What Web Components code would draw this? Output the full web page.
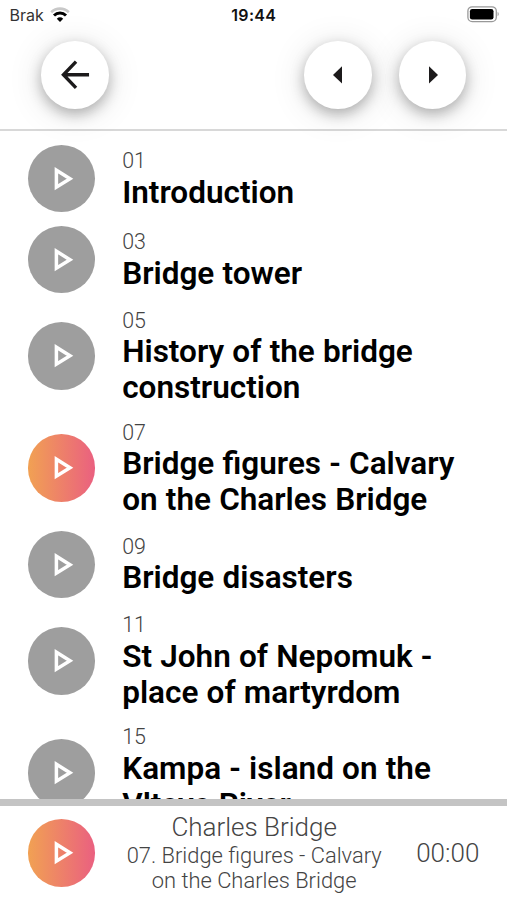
<!DOCTYPE html>
<html lang="en">
<head>
<meta charset="utf-8">
<meta name="viewport" content="width=device-width, initial-scale=1">
<title>Charles Bridge</title>
<style>
  html, body {
    height: 100%;
    margin: 0;
  }

  body {
    background: #fff;
    font-family: Roboto, "Liberation Sans", sans-serif;
  }
</style>
</head>
<body>
<audio-guide>
  <status-bar slot="header" carrier="Brak" time="19:44"></status-bar>
  <guide-toolbar slot="header">
    <round-button icon="back" label="Back"></round-button>
    <round-button icon="previous" label="Previous"></round-button>
    <round-button icon="next" label="Next"></round-button>
  </guide-toolbar>

  <track-row number="01">Introduction</track-row>
  <track-row number="03">Bridge tower</track-row>
  <track-row number="05">History of the bridge<br>construction</track-row>
  <track-row number="07" active>Bridge figures - Calvary<br>on the Charles Bridge</track-row>
  <track-row number="09">Bridge disasters</track-row>
  <track-row number="11">St John of Nepomuk -<br>place of martyrdom</track-row>
  <track-row number="15">Kampa - island on the<br>Vltava River</track-row>

  <mini-player slot="player" time="00:00">
    <span slot="title">Charles Bridge</span>
    07. Bridge figures - Calvary<br>on the Charles Bridge
  </mini-player>
</audio-guide>

<script>
class AudioGuide extends HTMLElement {
  connectedCallback() {
    if (this.shadowRoot) {
      return;
    }

    this.attachShadow({ mode: "open" }).innerHTML = `
      <style>
        :host {
          display: flex;
          flex-direction: column;
          height: 900px;
          overflow: hidden;
          background: #fff;
        }

        header {
          flex: none;
          box-sizing: border-box;
          height: 131px;
          border-bottom: 2px solid #d8d8d8;
        }

        main {
          flex: 1;
          min-height: 0;
          padding-top: 7.2px;
          overflow: hidden;
        }
      </style>
      <header><slot name="header"></slot></header>
      <main><slot></slot></main>
      <slot name="player"></slot>
    `;
  }
}

class StatusBar extends HTMLElement {
  connectedCallback() {
    if (this.shadowRoot) {
      return;
    }

    this.attachShadow({ mode: "open" }).innerHTML = `
      <style>
        :host {
          display: grid;
          grid-template-columns: 1fr auto 1fr;
          align-items: center;
          box-sizing: border-box;
          height: 30px;
          padding: 0 8px 0 9.5px;
          color: #111;
          font: 16px/30px Inter, "Liberation Sans", sans-serif;
        }

        .carrier {
          display: flex;
          align-items: center;
          gap: 6.5px;
          color: #333;
        }

        .time {
          margin-left: -1px;
          font-weight: 600;
          letter-spacing: 0.3px;
        }

        .battery {
          justify-self: end;
        }

        svg {
          display: block;
        }
      </style>
      <span class="carrier">
        <span class="name"></span>
        <svg width="20" height="16" viewBox="0 0 20 16" fill="none" stroke="#000">
          <path d="M1.2 5.2a12.6 12.6 0 0 1 17.6 0" stroke="#c8c8c8" stroke-width="2.6"/>
          <path d="M4 8.5a8.5 8.5 0 0 1 12 0" stroke-width="2.9"/>
          <path d="M10 15 6.8 11.7a4.8 4.8 0 0 1 6.4 0z" fill="#000" stroke="none"/>
        </svg>
      </span>
      <span class="time"></span>
      <svg class="battery" width="32" height="18" viewBox="0 0 32 18">
        <rect x="0.9" y="0.8" width="28.4" height="14.8" rx="4.3" fill="none" stroke="#999" stroke-width="1.3"/>
        <rect x="2.9" y="2.9" width="23.6" height="10.6" rx="2.3"/>
        <path d="M30.6 6c1.5.7 1.5 3.5 0 4.2z" fill="#999"/>
      </svg>
    `;
    this.shadowRoot.querySelector(".name").textContent = this.getAttribute("carrier") ?? "";
    this.shadowRoot.querySelector(".time").textContent = this.getAttribute("time") ?? "";
  }
}

class GuideToolbar extends HTMLElement {
  connectedCallback() {
    if (this.shadowRoot) {
      return;
    }

    this.attachShadow({ mode: "open" }).innerHTML = `
      <style>
        :host {
          display: flex;
          gap: 27px;
          padding: 11px 41px 0;
        }

        ::slotted(:first-child) {
          margin-right: auto;
        }
      </style>
      <slot></slot>
    `;
  }
}

const icons = {
  back: `<path d="M35.3 20.8 22.6 34l12.7 13.2M22.6 34h25.8" fill="none" stroke="#1c1a1b" stroke-width="3.4"/>`,
  previous: `<path d="M38.3 25.5v17.4L29.2 34.2z" fill="#1c1a1b"/>`,
  next: `<path d="M30.2 25.5v17.4l9.1-8.7z" fill="#1c1a1b"/>`
};

class RoundButton extends HTMLElement {
  connectedCallback() {
    if (this.shadowRoot) {
      return;
    }

    this.attachShadow({ mode: "open" }).innerHTML = `
      <style>
        :host {
          display: block;
        }

        button {
          display: block;
          width: 67.5px;
          height: 67.5px;
          padding: 0;
          border: 0;
          border-radius: 50%;
          background: #fff;
          box-shadow: 0 5px 14px rgb(0 0 0 / 28%), 0 4px 36px rgb(0 0 0 / 12%);
        }

        svg {
          display: block;
          width: 100%;
          height: 100%;
        }
      </style>
      <button><svg viewBox="0 0 68 68">${icons[this.getAttribute("icon")] ?? ""}</svg></button>
    `;
    this.shadowRoot.querySelector("button").ariaLabel = this.getAttribute("label");
  }
}

class PlayButton extends HTMLElement {
  connectedCallback() {
    if (this.shadowRoot) {
      return;
    }

    this.attachShadow({ mode: "open" }).innerHTML = `
      <style>
        :host {
          display: block;
          flex: none;
          width: 67.5px;
          height: 67.5px;
          border-radius: 50%;
          background: #9e9e9e;
        }

        :host([active]) {
          background: linear-gradient(90deg, #f1a153, #ea6080);
        }

        svg {
          display: block;
          width: 100%;
          height: 100%;
        }
      </style>
      <svg viewBox="0 0 67.5 67.5">
        <path d="M28.4 25.2v17l13.6-8.5z" fill="none" stroke="#fff" stroke-width="3.5"/>
      </svg>
    `;
  }
}

class TrackRow extends HTMLElement {
  connectedCallback() {
    if (this.shadowRoot) {
      return;
    }

    const active = this.hasAttribute("active") ? "active" : "";
    this.attachShadow({ mode: "open" }).innerHTML = `
      <style>
        :host {
          display: flex;
          align-items: center;
          gap: 27px;
          padding: 6.7px 27.7px;
        }

        .text {
          margin: 1px 0 -1px;
        }

        .number {
          color: #444;
          font-size: 21.4px;
          font-weight: 300;
          line-height: 26.2px;
        }

        .title {
          color: #000;
          font-size: 31.5px;
          font-weight: 600;
          line-height: 36.2px;
          word-spacing: 0.4px;
          white-space: nowrap;
        }
      </style>
      <play-button ${active}></play-button>
      <div class="text">
        <div class="number"></div>
        <div class="title"><slot></slot></div>
      </div>
    `;
    this.shadowRoot.querySelector(".number").textContent = this.getAttribute("number") ?? "";
  }
}

class MiniPlayer extends HTMLElement {
  connectedCallback() {
    if (this.shadowRoot) {
      return;
    }

    this.attachShadow({ mode: "open" }).innerHTML = `
      <style>
        :host {
          display: flex;
          align-items: center;
          flex: none;
          box-sizing: border-box;
          height: 101px;
          padding: 0 27.7px;
          border-top: 7px solid #c4c4c4;
          background: #fff;
          color: #444;
          font-weight: 300;
          white-space: nowrap;
        }

        .info {
          flex: 1;
          padding-right: 3px;
          text-align: center;
          font-size: 21.9px;
          line-height: 25.8px;
        }

        .title {
          font-size: 26px;
          line-height: 30.6px;
        }

        time {
          font-size: 26px;
        }
      </style>
      <play-button active></play-button>
      <div class="info">
        <div class="title"><slot name="title"></slot></div>
        <slot></slot>
      </div>
      <time></time>
    `;
    this.shadowRoot.querySelector("time").textContent = this.getAttribute("time") ?? "";
  }
}

customElements.define("play-button", PlayButton);
customElements.define("round-button", RoundButton);
customElements.define("status-bar", StatusBar);
customElements.define("guide-toolbar", GuideToolbar);
customElements.define("track-row", TrackRow);
customElements.define("mini-player", MiniPlayer);
customElements.define("audio-guide", AudioGuide);
</script>
</body>
</html>
